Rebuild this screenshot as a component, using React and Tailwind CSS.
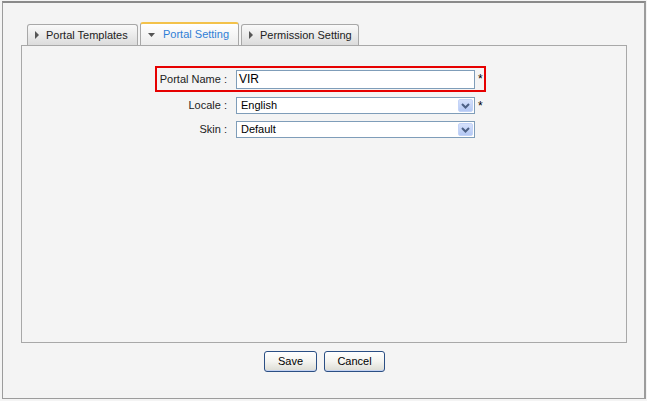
import React from "react";

const font = { fontFamily: '"Liberation Sans", Arial, sans-serif' };

function Tab({ label, active, w }) {
  if (active) {
    return (
      <div className={`${w} h-[23px] rounded-t-[3px] border border-b-0 border-[#a8a8a8] border-t-2 border-t-[#f3c24a] bg-gradient-to-b from-[#ffffff] to-[#ececec] flex items-center pl-[7px] gap-[8px]`}>
        <svg width="7" height="4" viewBox="0 0 7 4"><path d="M0 0h7L3.5 4z" fill="#555" /></svg>
        <span className="text-[11px] text-[#2f7fd6] whitespace-nowrap">{label}</span>
      </div>
    );
  }
  return (
    <div className={`${w} h-[21px] rounded-t-[3px] border border-b-0 border-[#a8a8a8] bg-gradient-to-b from-[#fafafa] to-[#dcdcdc] flex items-center pl-[7px] gap-[7px]`}>
      <svg width="4" height="8" viewBox="0 0 4 8"><path d="M0 0v8l4-4z" fill="#555" /></svg>
      <span className="text-[11px] text-[#222] whitespace-nowrap">{label}</span>
    </div>
  );
}

function Select({ value }) {
  return (
    <div className="w-[239px] h-[17px] border border-[#7f9db9] bg-white flex items-center justify-between pl-[4px] pr-[1px]">
      <span className="text-[11px] text-black">{value}</span>
      <div className="w-[15px] h-[13px] rounded-[2px] bg-gradient-to-b from-[#d6e1fb] to-[#b4c8f4] border border-[#c3d3f7] flex items-center justify-center">
        <svg width="9" height="6" viewBox="0 0 9 6"><path d="M1 1l3.5 3.5L8 1" stroke="#4d6185" strokeWidth="2" fill="none" /></svg>
      </div>
    </div>
  );
}

function Btn({ label, w }) {
  return (
    <button className={`${w} h-[21px] rounded-[3px] border border-[#2b4f84] bg-gradient-to-b from-[#ffffff] via-[#f4f4f0] to-[#dcdcd4] shadow-[inset_0_-1px_0_#c4d2f2] text-[11px] text-black`}>
      {label}
    </button>
  );
}

export default function App() {
  return (
    <div className="w-[647px] h-[401px] bg-[#f4f4f4] pt-[1px] pl-[2px]" style={font}>
      <div className="w-[644px] h-[398px] border border-[#9c9c9c] border-t-2 border-t-[#8a8a8a] border-r-2 flex flex-col pt-[19px] pl-[18px]">
        <div className="flex items-end gap-[2px] pl-[6px]">
          <Tab label="Portal Templates" w="w-[111px]" />
          <Tab label="Portal Setting" w="w-[99px]" active />
          <Tab label="Permission Setting" w="w-[118px]" />
        </div>
        <div className="w-[606px] h-[298px] border border-[#a8a8a8] bg-[#f4f4f4] flex flex-col pt-[20px] pl-[133px]">
          <div className="w-[331px] h-[26px] border-2 border-[#e60000] flex items-center">
            <div className="w-[70px] text-right text-[11px] text-[#222] whitespace-nowrap">Portal Name :</div>
            <div className="ml-[9px] w-[239px] h-[19px] border border-[#7f9db9] bg-white flex items-center pl-[2px] text-[12px] text-black">VIR</div>
            <span className="ml-[3px] text-[12px] text-black leading-none">*</span>
          </div>
          <div className="flex items-center mt-[5px] pl-[2px]">
            <div className="w-[70px] text-right text-[11px] text-[#222] whitespace-nowrap">Locale :</div>
            <div className="ml-[9px]"><Select value="English" /></div>
            <span className="ml-[3px] text-[12px] text-black leading-none">*</span>
          </div>
          <div className="flex items-center mt-[7px] pl-[2px]">
            <div className="w-[70px] text-right text-[11px] text-[#222] whitespace-nowrap">Skin :</div>
            <div className="ml-[9px]"><Select value="Default" /></div>
          </div>
        </div>
        <div className="flex justify-center gap-[7px] mt-[8px] pr-[18px] pl-[2px]">
          <Btn label="Save" w="w-[53px]" />
          <Btn label="Cancel" w="w-[61px]" />
        </div>
      </div>
    </div>
  );
}
